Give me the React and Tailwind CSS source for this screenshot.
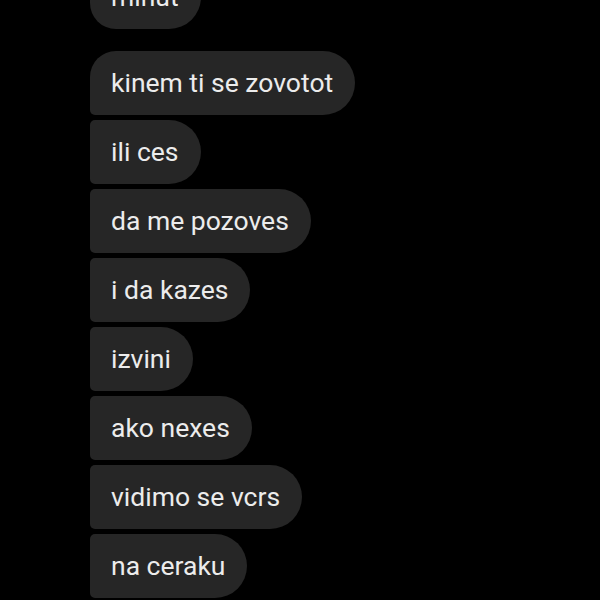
const messages = [
  { text: 'kinem ti se zovotot', pos: 'first' },
  { text: 'ili ces', pos: 'mid' },
  { text: 'da me pozoves', pos: 'mid' },
  { text: 'i da kazes', pos: 'mid' },
  { text: 'izvini', pos: 'mid' },
  { text: 'ako nexes', pos: 'mid' },
  { text: 'vidimo se vcrs', pos: 'mid' },
  { text: 'na ceraku', pos: 'mid' },
]

function Bubble({ text, pos }) {
  const corners =
    pos === 'first'
      ? 'rounded-tl-[26px] rounded-bl-[5px]'
      : pos === 'last'
        ? 'rounded-tl-[5px] rounded-bl-[26px]'
        : 'rounded-tl-[5px] rounded-bl-[5px]'

  return (
    <div
      className={[
        'self-start h-[64px] flex items-center bg-[#262626] text-[#ececec] pl-[21px] pr-[22px] rounded-tr-[32px] rounded-br-[32px] text-[26.5px]',
        corners,
      ].join(' ')}
    >
      {text}
    </div>
  )
}

export default function App() {
  return (
    <div
      className="w-[600px] h-[600px] bg-black overflow-hidden flex flex-col items-start pl-[90px]"
      style={{ fontFamily: 'Roboto, "Noto Sans", sans-serif' }}
    >
      <div className="mt-[-35px] mb-[22px] flex">
        <Bubble text="minut" pos="last" />
      </div>
      <div className="flex flex-col items-start gap-[5px]">
        {messages.map((m) => (
          <Bubble key={m.text} text={m.text} pos={m.pos} />
        ))}
      </div>
    </div>
  )
}
